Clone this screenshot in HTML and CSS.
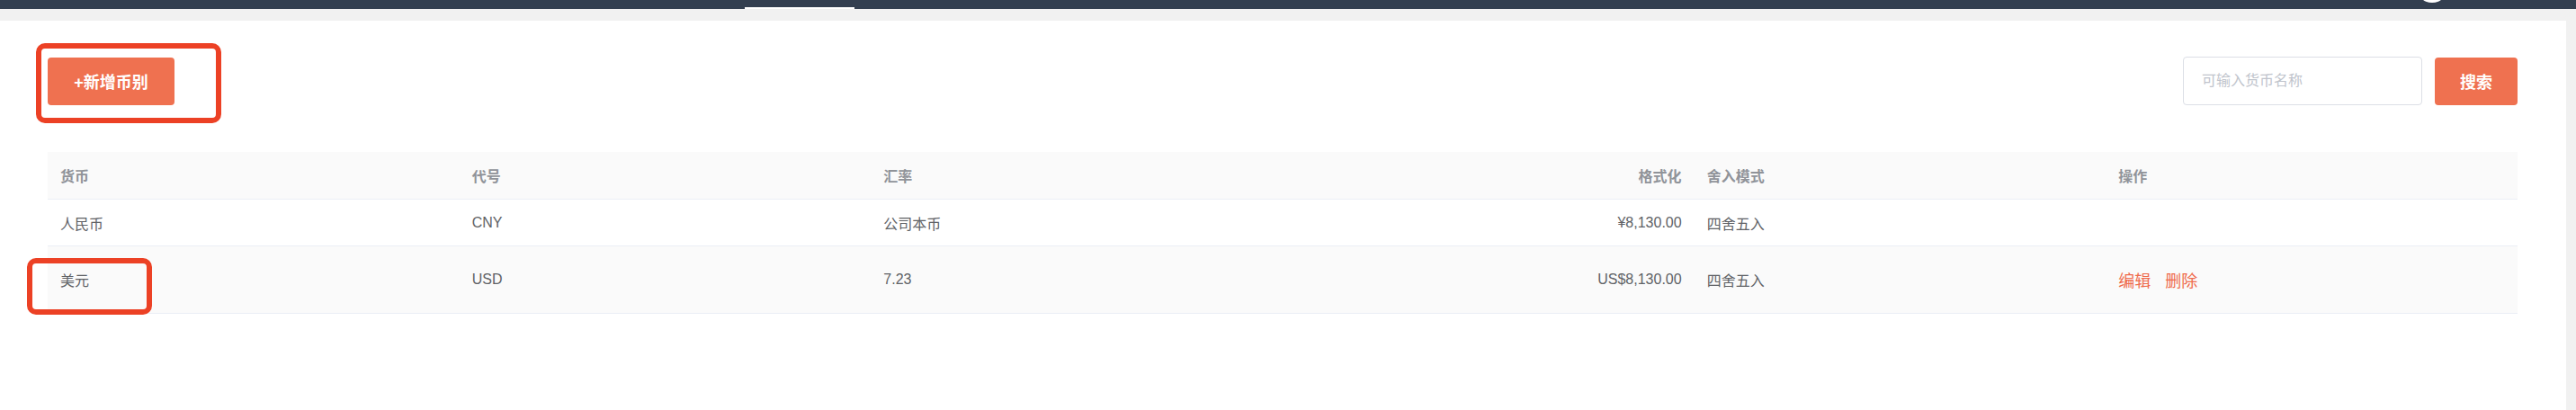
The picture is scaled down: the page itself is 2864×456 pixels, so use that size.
FILE: index.html
```html
<!DOCTYPE html>
<html lang="zh-CN">
<head>
<meta charset="utf-8">
<title>币别管理</title>
<link rel="stylesheet" href="styles.css">
</head>
<body>
<header class="navbar">
  <span class="tab-active"></span>
  <span class="avatar"></span>
</header>
<main class="main">
  <section class="panel">
    <div class="toolbar">
      <button class="btn btn-add" type="button">+新增币别</button>
      <div class="search">
        <input class="search-input" type="text" placeholder="可输入货币名称">
        <button class="btn btn-search" type="button">搜索</button>
      </div>
    </div>
    <table class="currency-table">
      <thead>
        <tr>
          <th>货币</th>
          <th>代号</th>
          <th>汇率</th>
          <th class="num">格式化</th>
          <th>舍入模式</th>
          <th>操作</th>
        </tr>
      </thead>
      <tbody>
        <tr class="row">
          <td>人民币</td>
          <td>CNY</td>
          <td>公司本币</td>
          <td class="num">¥8,130.00</td>
          <td>四舍五入</td>
          <td></td>
        </tr>
        <tr class="row row-active">
          <td>美元</td>
          <td>USD</td>
          <td>7.23</td>
          <td class="num">US$8,130.00</td>
          <td>四舍五入</td>
          <td>
            <button class="link-btn" type="button">编辑</button><button class="link-btn" type="button">删除</button>
          </td>
        </tr>
      </tbody>
    </table>
    <span class="mark mark-add"></span>
    <span class="mark mark-usd"></span>
  </section>
</main>
</body>
</html>
```
FILE: styles.css
```css
html, body {
  margin: 0;
  padding: 0;
}

body {
  background: #f1f1f1;
  font-family: "Liberation Sans", "Noto Sans CJK SC", sans-serif;
  overflow: hidden;
}

.navbar {
  height: 10px;
  background: #333f50;
  display: flex;
  align-items: flex-end;
  overflow: hidden;
}

.tab-active {
  flex: none;
  margin-left: 828px;
  width: 122px;
  height: 2px;
  background: #ffffff;
}

.avatar {
  flex: none;
  margin-left: auto;
  margin-right: 142px;
  margin-bottom: 7px;
  width: 36px;
  height: 36px;
  border-radius: 50%;
  background: #ffffff;
}

.main {
  padding: 13px 11px 0 0;
}

.panel {
  position: relative;
  box-sizing: border-box;
  height: 433px;
  background: #ffffff;
  padding: 40px 54px 0 53px;
}

.toolbar {
  display: flex;
  justify-content: space-between;
  align-items: center;
  margin-bottom: 52px;
}

.btn {
  border: 0;
  border-radius: 4px;
  background: #ef7150;
  color: #ffffff;
  font-family: "Liberation Sans", "Noto Sans CJK SC", sans-serif;
  font-size: 18px;
  font-weight: 700;
  height: 53px;
  padding: 0;
  cursor: pointer;
}

.btn-add {
  width: 141px;
}

.btn-search {
  width: 92px;
}

.search {
  display: flex;
  align-items: center;
  gap: 14px;
}

.search-input {
  box-sizing: border-box;
  width: 266px;
  height: 54px;
  border: 1px solid #dcdfe6;
  border-radius: 4px;
  padding: 0 20px;
  font-family: "Liberation Sans", "Noto Sans CJK SC", sans-serif;
  font-size: 16px;
  color: #606266;
  outline: none;
}

.search-input::placeholder {
  color: #c0c4cc;
}

.currency-table {
  width: 100%;
  border-collapse: collapse;
  table-layout: fixed;
  font-size: 16px;
  color: #606266;
}

.currency-table th {
  height: 52px;
  padding: 0 14px;
  background: #fafafa;
  color: #909399;
  font-weight: 700;
  text-align: left;
  border-bottom: 1px solid #ebeef5;
}

.currency-table td {
  height: 51px;
  padding: 0 14px;
  border-bottom: 1px solid #ebeef5;
}

.currency-table .row-active td {
  height: 74px;
  background: #fafafa;
}

.currency-table .num {
  text-align: right;
}

.link-btn {
  border: 0;
  background: none;
  padding: 0;
  margin-right: 16px;
  color: #ef6a4c;
  font-family: "Liberation Sans", "Noto Sans CJK SC", sans-serif;
  font-size: 18px;
  cursor: pointer;
}

.mark {
  position: absolute;
  box-sizing: border-box;
  border: 6px solid #ec4125;
  border-radius: 10px;
}

.mark-add {
  left: 40px;
  top: 25px;
  width: 206px;
  height: 89px;
}

.mark-usd {
  left: 30px;
  top: 264px;
  width: 139px;
  height: 63px;
}
```
